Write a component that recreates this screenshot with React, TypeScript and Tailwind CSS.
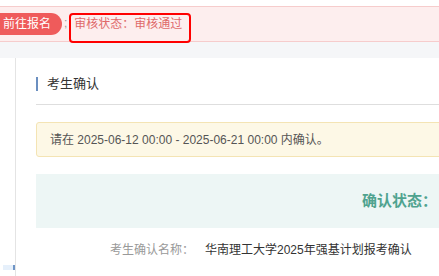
import React from 'react';

const FONT = { fontFamily: '"Liberation Sans", "Noto Sans CJK SC", sans-serif' };

const App: React.FC = () => {
  return (
    <div className="w-[439px] h-[276px] overflow-hidden bg-white flex flex-col" style={FONT}>
      {/* status banner */}
      <div className="mt-[6px] h-[36px] shrink-0 border-y border-[#f6cccc] bg-[#fdeeee] flex items-start">
        <div className="-ml-[10px] mt-[6px] h-[22px] pl-[13px] pr-[11px] rounded-full bg-[#ef5b5b] text-white text-[12px] leading-[22px] whitespace-nowrap">
          前往报名
        </div>
        <span className="ml-[2px] mt-[8px] text-[12px] leading-[16px] text-[#999]">;</span>
        <div className="relative z-10 ml-[2px] mt-[6px] h-[30px] border-2 border-[#ff0000] rounded-[4px] pl-[3px] pr-[7px] pt-[1px] text-[12px] leading-[16px] text-[#e06a6a] whitespace-nowrap">
          审核状态：审核通过
        </div>
      </div>

      <div className="h-[16px] shrink-0 bg-[#f5f6f8]" />

      <div className="flex flex-1 min-h-0">
        {/* left gutter */}
        <div className="w-[15px] shrink-0 flex flex-col justify-end pb-[6px]">
          <div className="ml-[3px] h-[5px] w-[12px] bg-[#e6f0fb] border-r-2 border-[#6f95c6]" />
        </div>

        {/* card */}
        <div className="w-[600px] shrink-0 border-l border-[#e4e4e4] pl-[20px]">
          <div className="pt-[17px] pb-[11px] border-b border-[#dedede]">
            <div className="h-[18px] flex items-center">
              <div className="w-[2px] h-[14px] bg-[#6b8fc0]" />
              <span className="pl-[9px] text-[13px] text-[#333]">考生确认</span>
            </div>
          </div>

          <div className="mt-[17px] h-[35px] rounded-[3px] border border-[#f4e4b4] bg-[#fdf8e6] pl-[13px] flex items-center text-[12px] text-[#555] whitespace-nowrap">
            请在 2025-06-12 00:00 - 2025-06-21 00:00 内确认。
          </div>

          <div className="mt-[17px] h-[54px] bg-[#edf6f5] pl-[326px] flex items-center">
            <span className="text-[15px] font-bold text-[#4fa38f] whitespace-nowrap">确认状态：</span>
          </div>

          <div className="mt-[12px] flex items-center text-[12px] leading-[20px] whitespace-nowrap">
            <span className="w-[158px] text-right text-[#999]">考生确认名称：</span>
            <span className="ml-[11px] text-[#333]">华南理工大学2025年强基计划报考确认</span>
          </div>
        </div>
      </div>
    </div>
  );
};

export default App;
